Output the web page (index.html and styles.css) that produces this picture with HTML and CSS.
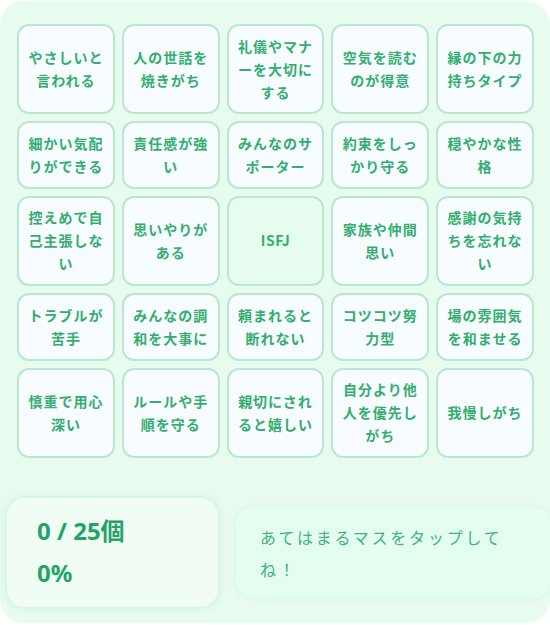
FILE: index.html
```html
<!DOCTYPE html>
<html>

<head>
  <meta charset="utf-8">
  <link rel="stylesheet" href="styles.css">
</head>

<body>
  <div class="panel">
<!-- bingo grid -->
    <div class="grid">
      <div class="cell">やさしいと言われる</div>
      <div class="cell">人の世話を焼きがち</div>
      <div class="cell">礼儀やマナーを大切にする</div>
      <div class="cell">空気を読むのが得意</div>
      <div class="cell">縁の下の力持ちタイプ</div>
      <div class="cell">細かい気配りができる</div>
      <div class="cell">責任感が強い</div>
      <div class="cell">みんなのサポーター</div>
      <div class="cell">約束をしっかり守る</div>
      <div class="cell">穏やかな性格</div>
      <div class="cell">控えめで自己主張しない</div>
      <div class="cell">思いやりがある</div>
      <div class="cell center">ISFJ</div>
      <div class="cell">家族や仲間思い</div>
      <div class="cell">感謝の気持ちを忘れない</div>
      <div class="cell">トラブルが苦手</div>
      <div class="cell">みんなの調和を大事に</div>
      <div class="cell">頼まれると断れない</div>
      <div class="cell">コツコツ努力型</div>
      <div class="cell">場の雰囲気を和ませる</div>
      <div class="cell">慎重で用心深い</div>
      <div class="cell">ルールや手順を守る</div>
      <div class="cell">親切にされると嬉しい</div>
      <div class="cell">自分より他人を優先しがち</div>
      <div class="cell">我慢しがち</div>
    </div>
<!-- footer -->
    <div class="footer">
      <div class="stats">
        <div class="count">0 / 25個</div>
        <div class="percent">0%</div>
      </div>
      <div class="hint">あてはまるマスをタップしてね！</div>
    </div>
  </div>
</body>

</html>
```

FILE: styles.css
```css
body {
  margin: 0;
  background-color: #ffffff;
  font-family: "Noto Sans CJK JP", "Noto Sans", sans-serif;
}

.panel {
  margin-top: 1px;
  width: 550px;
  height: 622px;
  background-color: #e8fbef;
  border-radius: 24px;
  padding-top: 23px;
  box-sizing: border-box;
}

.grid {
  display: grid;
  grid-template-columns: repeat(5, 1fr);
  gap: 7px;
  margin-left: 17px;
  width: 517px;
}

.cell {
  display: flex;
  align-items: center;
  justify-content: center;
  text-align: center;
  padding: 8.7px 5px;
  background-color: #f6fcff;
  border: 2px solid #b9e7cf;
  border-radius: 12px;
  color: #34ad6e;
  font-size: 14px;
  font-weight: bold;
  line-height: 23px;
  letter-spacing: 1px;
  cursor: pointer;
}

.cell.center {
  background-color: #e5fcef;
  letter-spacing: 0.5px;
}

.footer {
  display: flex;
  align-items: center;
  gap: 18px;
  margin-top: 40px;
  padding-left: 7px;
}

.stats {
  width: 211px;
  height: 109px;
  box-sizing: border-box;
  padding: 12px 30px;
  background-color: #f1fdf4;
  border-radius: 18px;
  box-shadow: 0 0 6px 2px rgba(190, 242, 212, 0.6);
  color: #22a467;
  font-family: "Noto Sans", "Noto Sans CJK JP", sans-serif;
  font-size: 24px;
  font-weight: bold;
  line-height: 42px;
}

.hint {
  flex: 1;
  height: 91px;
  box-sizing: border-box;
  padding: 14px 36px 14px 24px;
  background-color: #e3fdf0;
  border-radius: 16px;
  box-shadow: 0 0 4px 1px rgba(210, 245, 222, 0.7);
  color: #3fb47a;
  font-size: 16px;
  line-height: 32px;
  letter-spacing: 2.8px;
}
```
